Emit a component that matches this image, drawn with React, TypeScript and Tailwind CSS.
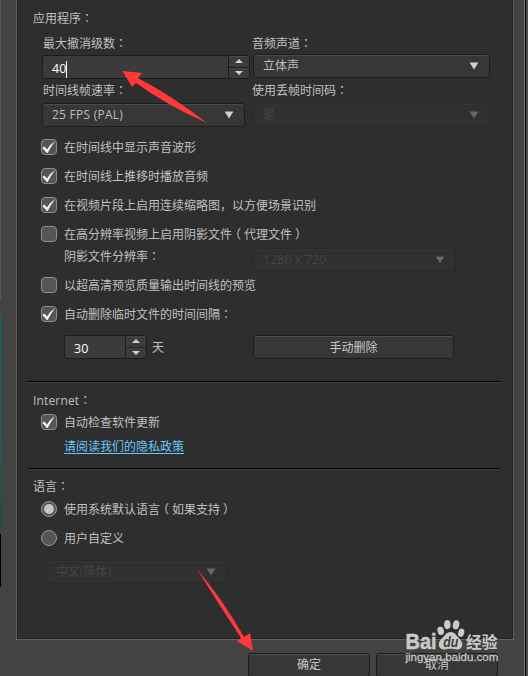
import type { ReactNode } from "react";

function Colon() {
  return <span className="font-['Noto_Sans_CJK_JP',sans-serif]">：</span>;
}

function Parens({ children }: { children: ReactNode }) {
  return (
    <>
      <span className="-ml-[3px] mr-[3px]">（</span>
      {children}
      <span className="ml-[3px] -mr-[3px]">）</span>
    </>
  );
}

function Label({ children, colon = false, className = "" }: { children: ReactNode; colon?: boolean; className?: string }) {
  return (
    <span className={`block h-4 shrink-0 whitespace-nowrap leading-4 ${className}`}>
      {children}
      {colon && <Colon />}
    </span>
  );
}

function Checkbox({ checked = false }: { checked?: boolean }) {
  return (
    <span className="block size-4 shrink-0 rounded-[4px] border border-[#8e8e8e] bg-[#555557]">
      {checked && (
        <svg viewBox="0 0 14 14" className="block size-3.5" aria-hidden="true">
          <path d="M0.3 8 2.4 6.6 5 9.4Q8 4.2 13 1.2 8.8 6.5 5.7 13H4.9Z" fill="#f4f4f4" />
        </svg>
      )}
    </span>
  );
}

function CheckRow({ children, checked = false, colon = false, className = "" }: { children: ReactNode; checked?: boolean; colon?: boolean; className?: string }) {
  return (
    <div className={`flex h-4 shrink-0 items-start gap-[7px] pl-6 ${className}`}>
      <Checkbox checked={checked} />
      <Label colon={colon} className={colon ? "" : "mt-px"}>{children}</Label>
    </div>
  );
}

function RadioRow({ children, selected = false, className = "" }: { children: ReactNode; selected?: boolean; className?: string }) {
  return (
    <div className={`flex h-4 shrink-0 items-start gap-[7px] pl-6 ${className}`}>
      <span className="flex size-4 shrink-0 items-center justify-center rounded-full border border-[#999] bg-[#555557]">
        {selected && <span className="size-2.5 rounded-full bg-[#c4c4c4]" />}
      </span>
      <Label className="mt-px">{children}</Label>
    </div>
  );
}

function Select({ children, disabled = false, className = "" }: { children: ReactNode; disabled?: boolean; className?: string }) {
  const tone = disabled
    ? "border-[#292929] bg-[#303030] text-[#464646] shadow-[inset_0_1px_0_#343434]"
    : "border-[#1d1d1d] bg-[#373737] text-[#bdbdbd] shadow-[inset_0_1px_0_#4b4b4b]";
  return (
    <div className={`flex h-6 shrink-0 items-center justify-between rounded-[3px] border pl-[9px] pr-2.5 ${tone} ${className}`}>
      <span className="whitespace-nowrap leading-4">{children}</span>
      <svg viewBox="0 0 10 8" className={`h-2 w-2.5 ${disabled ? "text-[#686868]" : "text-[#d2d2d2]"}`} aria-hidden="true">
        <path d="M0.6 0.6H9.4L5 7.6Z" fill="currentColor" />
      </svg>
    </div>
  );
}

function Spinner({ value, focused = false, className = "" }: { value: string; focused?: boolean; className?: string }) {
  return (
    <div className={`flex h-6 shrink-0 overflow-hidden rounded-[3px] border border-[#1d1d1d] bg-[#3b3b3b] ${className}`}>
      <div className="flex flex-1 items-center pl-[9px] pt-1 text-[12.5px] text-white">
        <span className="leading-4">{value}</span>
        {focused && <span className="h-[17px] w-px bg-white" />}
      </div>
      <div className="flex w-[21px] flex-col border-l border-[#1d1d1d]">
        <span className="flex flex-1 items-center justify-center border-b border-[#1d1d1d] shadow-[inset_0_1px_0_#4a4a4a]">
          <svg viewBox="0 0 8 4" className="h-1 w-2" aria-hidden="true"><path d="M0 4 4 0 8 4Z" fill="#d0d0d0" /></svg>
        </span>
        <span className="flex flex-1 items-center justify-center shadow-[inset_0_1px_0_#444]">
          <svg viewBox="0 0 8 4" className="h-1 w-2" aria-hidden="true"><path d="M0 0H8L4 4Z" fill="#d0d0d0" /></svg>
        </span>
      </div>
    </div>
  );
}

function Button({ children, className = "" }: { children: ReactNode; className?: string }) {
  return (
    <button className={`flex h-6 shrink-0 items-center justify-center rounded-[3px] border border-[#1d1d1d] bg-[#373737] leading-4 text-[#c8c8c8] shadow-[inset_0_1px_0_#4d4d4d] ${className}`}>
      {children}
    </button>
  );
}

function Divider() {
  return <div className="ml-[11px] h-0.5 w-[472px] shrink-0 border-b border-[#414141] bg-black" />;
}

function Watermark() {
  return (
    <svg viewBox="0 0 100 46" className="absolute left-[403px] top-[618px] h-[46px] w-[100px]" aria-hidden="true">
      <g fill="#c9c9c9">
        <ellipse cx="37.7" cy="12.9" rx="3.2" ry="4.2" transform="rotate(-15 37.7 12.9)" />
        <ellipse cx="44.3" cy="6.6" rx="3.2" ry="4.6" />
        <ellipse cx="53" cy="6.8" rx="3.2" ry="4.6" transform="rotate(12 53 6.8)" />
        <ellipse cx="58.2" cy="14.8" rx="3" ry="4.2" transform="rotate(15 58.2 14.8)" />
        <path d="M47.6 14c4.6 0 6.2 4.2 8.6 6.4 4.8 4.4 3.7 10.8-1.6 11-2.8.1-4.4-.6-6.9-.6s-4.5.7-7.2.6c-5.7-.3-6.3-7.3-1.3-11.4 2.6-2.2 4-6 8.4-6Z" />
        <text x="2.6" y="30.6" fontSize="21.5" fontWeight="700" stroke="#c9c9c9" strokeWidth=".5" textLength="31" lengthAdjust="spacingAndGlyphs" className="font-['Liberation_Sans',sans-serif]">Bai</text>
        <text x="63" y="29.6" fontSize="16" fontWeight="700" textLength="31.5" lengthAdjust="spacingAndGlyphs" className="font-['Noto_Sans_CJK_SC',sans-serif]">经验</text>
        <text x="2.4" y="42.8" fontSize="11" stroke="#c9c9c9" strokeWidth=".25" textLength="93" lengthAdjust="spacingAndGlyphs" className="font-['Liberation_Sans',sans-serif]">jingyan.baidu.com</text>
      </g>
      <text x="40.2" y="28.8" fontSize="14" fontWeight="700" fontStyle="italic" fill="#3b3b3b" textLength="15" lengthAdjust="spacingAndGlyphs" className="font-['Liberation_Sans',sans-serif]">du</text>
    </svg>
  );
}

export default function App() {
  return (
    <div className="relative flex h-[676px] w-[528px] overflow-hidden bg-[#434343] font-['Open_Sans','Noto_Sans_CJK_SC',sans-serif] text-[12px] text-[#c0c0c0]">
      <div className="flex w-px shrink-0 flex-col">
        <span className="h-[299px] bg-[#5a5a5a]" />
        <span className="mt-[15px] h-[214px] bg-linear-to-b from-[#006b72] via-[#126a70] to-[#064f58]" />
        <span className="mt-1.5 h-[53px] bg-black" />
      </div>

      <div className="flex w-[523px] shrink-0 flex-col pl-[15px]">
        <main className="h-[640px] w-[498px] shrink-0 border-b border-l border-r border-[#626262] bg-[#2e2e2e] shadow-[inset_1px_-1px_0_#222,inset_-1px_0_0_#222]">
          <section className="flex h-[381px] flex-col">
            <Label colon className="mb-px ml-4 mt-2.5">应用程序</Label>

            <div className="flex h-[101px] pl-[25px]">
              <div className="flex w-[211px] flex-col">
                <Label colon className="ml-px mt-2">最大撤消级数</Label>
                <Spinner value="40" focused className="mt-1 w-[208px]" />
                <Label colon className="ml-px mt-[3px]">时间线帧速率</Label>
                <Select className="mt-[5px] w-[203px]"><span className="tracking-[0.25px]">25 FPS (PAL)</span></Select>
              </div>
              <div className="flex w-[237px] flex-col">
                <Label colon className="-ml-px mt-2">音频声道</Label>
                <Select className="mt-[3px]">立体声</Select>
                <Label colon className="-ml-px mt-1">使用丢帧时间码</Label>
                <Select disabled className="mt-[5px]">是</Select>
              </div>
            </div>

            <CheckRow checked className="mt-[11px]">在时间线中显示声音波形</CheckRow>
            <CheckRow checked className="mt-[13px]">在时间线上推移时播放音频</CheckRow>
            <CheckRow checked className="mt-[13px]">在视频片段上启用连续缩略图，以方便场景识别</CheckRow>
            <CheckRow className="mt-[13px]">在高分辨率视频上启用阴影文件<Parens>代理文件</Parens></CheckRow>

            <div className="mt-1.5 flex h-6 pl-[47px]">
              <Label colon className="w-[189px]">阴影文件分辨率</Label>
              <Select disabled className="w-[203px]"><span className="text-[12.5px]">1280 x 720</span></Select>
            </div>

            <CheckRow className="mt-[5px]">以超高清预览质量输出时间线的预览</CheckRow>
            <CheckRow checked colon className="mt-[13px]">自动删除临时文件的时间间隔</CheckRow>

            <div className="mt-[13px] flex h-6 items-start pl-[47px]">
              <Spinner value="30" className="w-[83px]" />
              <Label className="ml-[5px] mt-[5px] w-[101px]">天</Label>
              <Button className="w-[201px] pt-px">手动删除</Button>
            </div>
          </section>

          <Divider />
          <section className="flex h-[85px] flex-col">
            <Label colon className="ml-4 mt-[9px]"><span className="tracking-[0.15px]">Internet</span></Label>
            <CheckRow checked className="mt-1.5">自动检查软件更新</CheckRow>
            <a className="ml-[47px] mt-[9px] h-[15px] w-[120px] border-b border-[#6bc6fa] leading-4 text-[#6bc6fa]">请阅读我们的隐私政策</a>
          </section>

          <Divider />
          <section className="flex flex-col">
            <Label colon className="ml-4 mt-2">语言</Label>
            <RadioRow selected className="mt-[7px]">使用系统默认语言<Parens>如果支持</Parens></RadioRow>
            <RadioRow className="mt-[13px]">用户自定义</RadioRow>
            <Select disabled className="ml-[29px] mt-3.5 w-[181px]">中文(简体)</Select>
          </section>
        </main>

        <footer className="mt-[13px] flex shrink-0 gap-1.5 pl-[232px]">
          <Button className="w-[122px]">确定</Button>
          <Button className="w-[122px]">取消</Button>
        </footer>
      </div>

      <div className="flex w-1 shrink-0">
        <span className="w-px bg-[#777]" />
        <span className="w-px bg-black" />
        <span className="w-0.5 bg-[#504d52]" />
      </div>

      <svg viewBox="0 0 528 676" className="pointer-events-none absolute inset-0 h-full w-full" aria-hidden="true">
        <path d="M122.5 71 142 73 138 78Q174 97 207 123Q168 106 136 83L132 87Z" fill="#ff3838" />
        <path d="M197 569Q223 600 244 637L250 633 253 651 237 641 241 638Q219 605 197 569Z" fill="#ff3838" />
      </svg>
      <Watermark />
    </div>
  );
}
